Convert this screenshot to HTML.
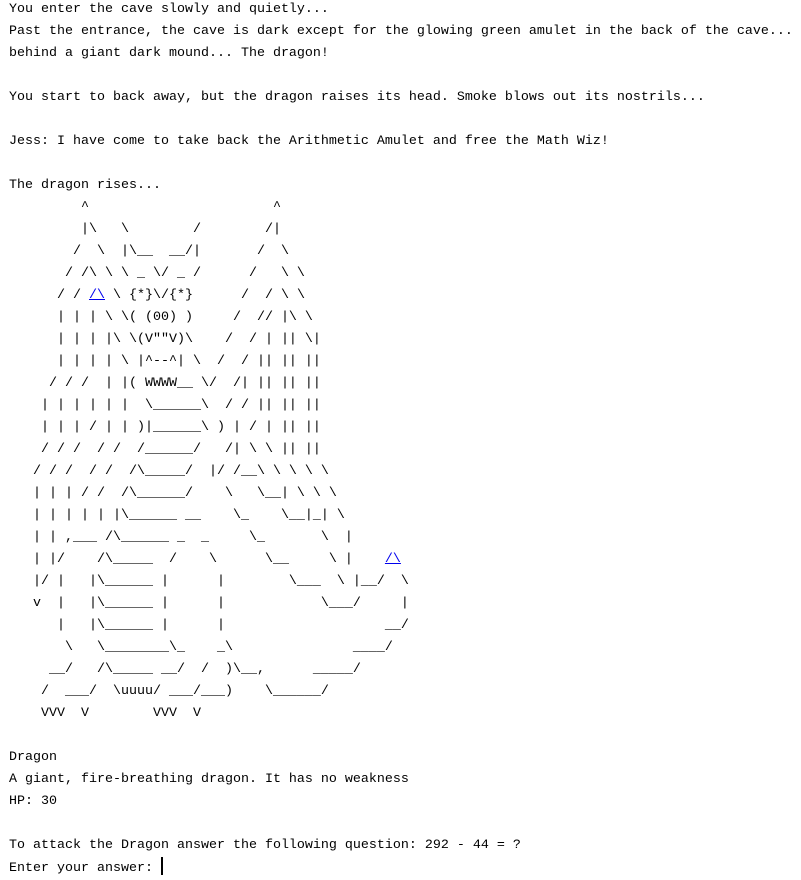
<!DOCTYPE html>
<html><head><meta charset="utf-8"><style>
html,body{margin:0;padding:0;background:#fff;width:801px;height:877px;overflow:hidden}
pre{margin:0;position:absolute;left:9px;top:-1px;font-family:"Liberation Mono","DejaVu Sans Mono",monospace;font-size:13.33px;line-height:22px;color:#000}
.l{color:#0000ee;text-decoration:underline}
.c{display:inline-block;width:2px;height:18px;background:#000;vertical-align:-4px}
</style></head><body>
<pre>You enter the cave slowly and quietly...
Past the entrance, the cave is dark except for the glowing green amulet in the back of the cave...
behind a giant dark mound... The dragon!

You start to back away, but the dragon raises its head. Smoke blows out its nostrils...

Jess: I have come to take back the Arithmetic Amulet and free the Math Wiz!

The dragon rises...
         ^                       ^
         |\   \        /        /|
        /  \  |\__  __/|       /  \
       / /\ \ \ _ \/ _ /      /   \ \
      / / <span class="l">/\</span> \ {*}\/{*}      /  / \ \
      | | | \ \( (00) )     /  // |\ \
      | | | |\ \(V""V)\    /  / | || \|
      | | | | \ |^--^| \  /  / || || ||
     / / /  | |( WWWW__ \/  /| || || ||
    | | | | | |  \______\  / / || || ||
    | | | / | | )|______\ ) | / | || ||
    / / /  / /  /______/   /| \ \ || ||
   / / /  / /  /\_____/  |/ /__\ \ \ \ \
   | | | / /  /\______/    \   \__| \ \ \
   | | | | | |\______ __    \_    \__|_| \
   | | ,___ /\______ _  _     \_       \  |
   | |/    /\_____  /    \      \__     \ |    <span class="l">/\</span>
   |/ |   |\______ |      |        \___  \ |__/  \
   v  |   |\______ |      |            \___/     |
      |   |\______ |      |                    __/
       \   \________\_    _\               ____/
     __/   /\_____ __/  /  )\__,      _____/
    /  ___/  \uuuu/ ___/___)    \______/
    VVV  V        VVV  V

Dragon
A giant, fire-breathing dragon. It has no weakness
HP: 30

To attack the Dragon answer the following question: 292 - 44 = ?
Enter your answer: <span class="c"></span></pre>
</body></html>
